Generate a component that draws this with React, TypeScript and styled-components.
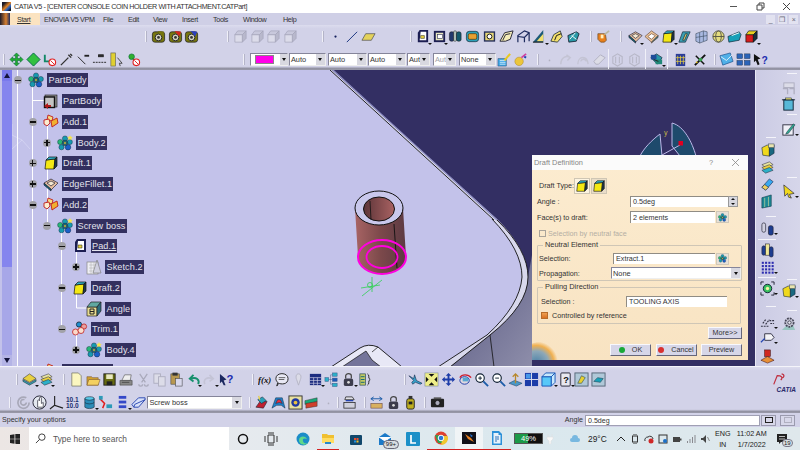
import React from "react";
import styled, { createGlobalStyle } from "styled-components";

const GlobalStyle = createGlobalStyle`
  html, body { margin: 0; padding: 0; width: 800px; height: 450px; overflow: hidden; }
  body { font-family: "Liberation Sans", Arial, sans-serif; background: #d2d2e8; }
`;

const box = (f: string, t: string, s: string, line = "#111") => (
  <g stroke={line} strokeWidth=".7">
    <path d="M2 6h8v8H2z" fill={f} />
    <path d="M2 6l3-4h9l-4 4z" fill={t} />
    <path d="M10 6l4-4v8l-4 4z" fill={s} />
  </g>
);
const dim = box("#dcdcea", "#c8c8dc", "#b8b8cc", "#a4a4b8");
const olive = (c: string) => (
  <g>
    <rect x="1.5" y="3" width="13" height="11" rx="2.5" fill="#77760e" stroke="#222" strokeWidth=".8" />
    <circle cx="8" cy="9" r="3.6" fill="#d4d4c0" stroke="#222" />
    <circle cx="8" cy="9" r="1.5" fill="#333" />
    <path d="M7 2l7 1-2 5z" fill={c} />
  </g>
);
const blob = (a: string, b: string) => (
  <g stroke="#123" strokeWidth=".4">
    <circle cx="8" cy="3.5" r="2.6" fill={a} />
    <circle cx="3.2" cy="7" r="2.6" fill={b} />
    <circle cx="12.8" cy="7" r="2.6" fill={a} />
    <circle cx="4.5" cy="12.2" r="2.6" fill={a} />
    <circle cx="11" cy="12.2" r="2.8" fill="#1a5fc8" />
    <circle cx="8" cy="8" r="2.8" fill="#1b6a80" />
    <circle cx="8" cy="8" r="1.2" fill="#e8d94a" />
  </g>
);
const star = <path d="M13 0l.8 1.8 2 .2-1.5 1.3.5 2-1.8-1-1.8 1 .5-2L10.2 2l2-.2z" fill="#f7e64a" />;
const arrows = (c: string) => (
  <g fill={c} stroke="#063" strokeWidth=".6">
    <path d="M8 1l3 3H9v3h3V5l3 3-3 3V9H9v3h2l-3 3-3-3h2V9H4v2L1 8l3-3v2h3V4H5z" />
  </g>
);
const dots = (c: string) => (
  <g fill={c}>
    {[3, 6.5, 10, 13.5].map((y) =>
      [3, 6.5, 10, 13.5].map((x) => <rect key={`${x}-${y}`} x={x - 1.1} y={y - 1.1} width="2.2" height="2.2" />)
    )}
  </g>
);

const glyphs: Record<string, React.ReactNode> = {
  cam: olive("#77760e"),
  camR: olive("#d4261c"),
  camB: olive("#2a3fc0"),
  dim,
  dot: <circle cx="8" cy="8" r="1.2" fill="#14205c" />,
  line: <path d="M3 14L14 3" stroke="#14307c" strokeWidth="1" />,
  para: <path d="M1 12l4-7h10l-4 7z" fill="#e4d25c" stroke="#555" strokeWidth=".8" />,
  pad: (
    <g>
      <path d="M5 1h9v13H3V4z" fill="#1c1e52" />
      <path d="M6 3h6v9H5z" fill="#fff" />
      <path d="M6 7h4v3H6z" fill="#e8d240" stroke="#111" strokeWidth=".5" />
    </g>
  ),
  pocket: (
    <g>
      <rect x="2" y="2" width="12" height="12" fill="#1c1e52" />
      <rect x="4" y="4" width="8" height="8" fill="#e8e8c0" />
      <rect x="6" y="6" width="5" height="4" fill="#fff" stroke="#225" strokeWidth=".6" />
    </g>
  ),
  shaft: (
    <g stroke="#111" strokeWidth=".5">
      <rect x="1.5" y="3" width="5" height="10" rx="2" fill="#23386c" />
      <rect x="6" y="2" width="3" height="11" rx="1" fill="#b8c8c0" />
      <rect x="9" y="3" width="5" height="10" rx="2" fill="#14586c" />
    </g>
  ),
  groove: (
    <g>
      <rect x="1.5" y="2.5" width="13" height="11" rx="3" fill="#2aa0b8" stroke="#123" strokeWidth=".7" />
      <rect x="3.5" y="5" width="9" height="6" rx="1.5" fill="#e8a030" stroke="#530" strokeWidth=".7" />
    </g>
  ),
  hole: (
    <g>
      <rect x="2" y="2.5" width="12" height="11" fill="#26305c" />
      <rect x="3.5" y="4" width="9" height="8" fill="#e8d878" />
      <circle cx="8" cy="8" r="2.6" fill="#fff" stroke="#111" />
    </g>
  ),
  rib: <path d="M1 13l5-9 9-2-3 9-5 2zM4 12l3-6 5-1" fill="#f4ecb8" stroke="#223" strokeWidth="1" />,
  slot: (
    <g fill="none" stroke="#1c2a5c" strokeWidth="1.3">
      <path d="M2 14V7l7-5 5 2v9" />
      <path d="M2 8l7 1 5-5M9 9v5" />
    </g>
  ),
  stiff: (
    <g>
      <path d="M1 14L12 1v13z" fill="#1c5a78" />
      <path d="M5 13l7-8v8z" fill="#f2e070" />
      <path d="M1 14h11" stroke="#111" />
    </g>
  ),
  loft: (
    <g>
      <path d="M2 13l3-7 7-4 2 6-5 6z" fill="#f4e06c" stroke="#123" strokeWidth=".8" />
      <path d="M6 12l2-5 5-2" fill="none" stroke="#111" strokeWidth="1" />
    </g>
  ),
  loft2: (
    <g>
      <path d="M2 7l9-4 3 2-3 8-8 1z" fill="#2a9aa8" stroke="#112" strokeWidth=".8" />
      <path d="M6 7l5 4M10 4l-6 7" stroke="#fff" strokeWidth="1" />
    </g>
  ),
  bowl: (
    <g>
      <path d="M2 5h8l1 7-2 2H5l-3-3z" fill="#e8801c" stroke="#642" strokeWidth=".7" />
      <path d="M5 6h3v4H5z" fill="#fff0c0" />
      <path d="M9 6l5-4" stroke="#b8b8a0" strokeWidth="2" />
    </g>
  ),
  fillet: (
    <g stroke="#223" strokeWidth=".7">
      <path d="M1 7l7-4 7 4-7 7z" fill="#e8c0a0" />
      <path d="M1 7v2l7 6V13z" fill="#167" />
      <path d="M4 7l4-2 4 2-4 3z" fill="#f4e8d0" />
    </g>
  ),
  fillet2: (
    <g stroke="#643" strokeWidth=".7">
      <path d="M1 8l7-6 7 5-7 7z" fill="#f0c89c" />
      <path d="M4 8l4-3 4 2-4 4z" fill="#fff" />
      <path d="M8 14l7-7v2l-7 6z" fill="#1a7a90" />
    </g>
  ),
  draft: (
    <g stroke="#111" strokeWidth=".7">
      <path d="M3 5l9-1-1 10H2z" fill="#f4e814" />
      <path d="M3 5l3-3h8l-2 2z" fill="#30b0c8" />
      <path d="M12 4l2-2v9l-3 3z" fill="#203848" />
    </g>
  ),
  slant: (
    <g stroke="#123" strokeWidth=".7">
      <path d="M2 14L6 3h8l-5 11z" fill="#3aa0b4" />
      <path d="M6 12l3-7 2 0-3 7z" fill="#e8d070" />
    </g>
  ),
  cage: (
    <g fill="#a8b8e0" stroke="#345" strokeWidth=".6">
      <path d="M2 5l8-3 4 1v9l-8 3-4-2z" />
      <path d="M6 4v11M10 2v11M2 9l12-2" fill="none" />
    </g>
  ),
  globe: (
    <g fill="none" stroke="#554" strokeWidth="1">
      <circle cx="8" cy="8" r="6" fill="#e4dc80" />
      <ellipse cx="8" cy="8" rx="3" ry="6" />
      <path d="M2 8h12" />
    </g>
  ),
  wave: (
    <g>
      <path d="M1 8l12-5 2 3-2 6-11 2z" fill="#18a0b8" stroke="#123" strokeWidth=".7" />
      <path d="M5 7l8-3" stroke="#fff" />
    </g>
  ),
  colorBox: box("#d81c1c", "#e8d020", "#18303c"),
  target: <g>{arrows("#22b030")}</g>,
  diamond: <path d="M8 1l7 7-7 7-7-7z" fill="#32c040" stroke="#064" strokeWidth="1" />,
  noAnchor: (
    <g>
      <path d="M3 3v7h7" stroke="#186" strokeWidth="2" fill="none" />
      <circle cx="11" cy="11" r="3.5" fill="#fff" stroke="#e02020" strokeWidth="1.2" />
      <path d="M9 9l4 4" stroke="#e02020" />
    </g>
  ),
  probe: <path d="M2 14L10 6M10 3l3 3M12 2l2 2" stroke="#333" strokeWidth="1.5" fill="none" />,
  toLine: (
    <g stroke="#222" strokeWidth="1" fill="none">
      <path d="M2 5l8 8" />
      <path d="M9 4h5" strokeWidth="2" />
    </g>
  ),
  dash: (
    <g fill="none" stroke="#222">
      <path d="M1 11h14" strokeDasharray="2 1" />
      <rect x="7" y="3" width="5" height="2" fill="#333" />
    </g>
  ),
  ruler: (
    <g>
      <rect x="2" y="1" width="5" height="14" fill="#e0d030" stroke="#665" strokeWidth=".7" />
      <path d="M9 6l5 6-3 0 1 3" stroke="#444" fill="none" />
    </g>
  ),
  noView: (
    <g>
      <circle cx="6" cy="5" r="3" fill="#30b030" stroke="#063" strokeWidth=".6" />
      <path d="M7 7l3 3" stroke="#444" />
      <circle cx="11" cy="11" r="3.5" fill="#fff" stroke="#e02020" strokeWidth="1.2" />
      <path d="M9 9l4 4" stroke="#e02020" />
    </g>
  ),
  brush: (
    <g>
      <path d="M1 7h9v8H1z" fill="#40a8e8" stroke="#246" strokeWidth=".5" />
      <path d="M3 9h6M3 11h6M3 13h6" stroke="#fff" strokeWidth=".7" />
      <path d="M8 9l6-7" stroke="#e8c820" strokeWidth="2.2" />
    </g>
  ),
  ball: (
    <g>
      <circle cx="6.5" cy="10" r="4.5" fill="#ecc63c" stroke="#a8801c" strokeWidth=".5" />
      <path d="M9 6l5-4" stroke="#d040a0" strokeWidth="2" />
      <path d="M12 5l2 1" stroke="#2040b0" strokeWidth="2" />
    </g>
  ),
  fade: <circle cx="8" cy="9" r=".9" fill="#b0b0c0" />,
  arcDim: <path d="M3 13c0-7 6-10 10-7M9 3l4 3-3 3" stroke="#c4c4d4" strokeWidth="1.6" fill="none" />,
  arcDim2: <path d="M3 13c0-9 10-10 11 0M6 10c1-3 5-3 6 0" stroke="#c4c4d4" strokeWidth="1.4" fill="none" />,
  eraser: <path d="M2 10l7-7 5 3-7 7H4z" fill="#dcdce6" stroke="#b0b0c0" />,
  hand: <path d="M3 5l5-3 5 3v7l-5 3-5-3zM6 5v7M10 5v7" fill="none" stroke="#b8b8c8" strokeWidth="1.2" />,
  net: (
    <g>
      <path d="M2 6l6-4 6 4-5 7z" fill="#2898a8" stroke="#123" strokeWidth=".7" />
      <rect x="2" y="3" width="6" height="5" fill="#1e4c98" />
      <rect x="7" y="8" width="7" height="5" fill="#208878" />
      <path d="M5 8l5 2" stroke="#222" />
    </g>
  ),
  navy: (
    <g>
      <rect x="3" y="2" width="10" height="13" fill="#2a3c98" />
      <path d="M5 4v9M8 4v9M11 4v9M3 6h10M3 10h10" stroke="#e8d040" strokeWidth=".8" />
    </g>
  ),
  black: (
    <g>
      <path d="M2 14L13 3" stroke="#111" strokeWidth="2" />
      <path d="M3 4l9 9" stroke="#111" strokeWidth="1.6" />
      <circle cx="8" cy="8" r="2" fill="#38a050" />
      <circle cx="4" cy="11" r="1" fill="#e0c020" />
    </g>
  ),
  mail: (
    <g>
      <path d="M1 4l11-3 3 9-11 4z" fill="#50b0e8" stroke="#1a4c88" strokeWidth=".7" />
      <path d="M2 5l6 4 6-6" stroke="#fff" fill="none" strokeWidth=".8" />
    </g>
  ),
  cubes: (
    <g fill="#2c64b8" stroke="#123" strokeWidth=".4">
      <rect x="1" y="2" width="6" height="5" />
      <rect x="9" y="2" width="6" height="5" />
      <rect x="1" y="9" width="6" height="5" />
      <rect x="9" y="9" width="6" height="5" />
    </g>
  ),
  help: (
    <g>
      <path d="M1 2l7 5-3 1 2 5-2 1-2-5-2 2z" fill="#111" />
      <text x="9" y="13" fontSize="11" fontWeight="700" fill="#1c2cb0" fontFamily="Liberation Sans">?</text>
    </g>
  ),
  layers: (
    <g stroke="#333" strokeWidth=".6">
      <path d="M1 7l7-5 7 5-7 4z" fill="#e8d040" />
      <path d="M1 10l7 4 7-4v-2l-7 4-7-4z" fill="#30a0b8" />
    </g>
  ),
  layers2: (
    <g stroke="#334" strokeWidth=".6">
      <path d="M2 5l8-3 4 3-8 3z" fill="#e8e4a0" />
      <path d="M2 8l8-3 4 3-8 3z" fill="#e8d040" />
      <path d="M2 11l8-3 4 3-8 3z" fill="#2cb0c8" />
    </g>
  ),
  newDoc: <path d="M3 1h7l3 3v11H3z" fill="#fbf6c0" stroke="#776" strokeWidth=".8" />,
  open: (
    <g stroke="#753" strokeWidth=".6">
      <path d="M1 5h5l1 1h6v8H1z" fill="#d0a030" />
      <path d="M3 8h12l-2 6H1z" fill="#f4d060" />
    </g>
  ),
  save: (
    <g>
      <rect x="2" y="2" width="12" height="12" fill="#666a10" stroke="#222" />
      <rect x="4.5" y="2.5" width="7" height="5" fill="#e8e8c0" />
      <rect x="5" y="10" width="6" height="4" fill="#222" />
    </g>
  ),
  print: (
    <g stroke="#444" strokeWidth=".6">
      <path d="M3 9l3-6h7l-1 6z" fill="#eee" />
      <path d="M1 9h13v5H1z" fill="#888" />
      <path d="M3 11h8" stroke="#222" />
    </g>
  ),
  cut: <path d="M4 2l6 9M12 2L6 11M3 13a1.5 1.5 0 1 0 4 0M9 13a1.5 1.5 0 1 0 4 0" stroke="#aaaabc" strokeWidth="1.4" fill="none" />,
  copy: (
    <g fill="#dcdce8" stroke="#aeaec0">
      <rect x="2" y="2" width="7" height="10" />
      <rect x="7" y="5" width="7" height="10" />
    </g>
  ),
  paste: (
    <g stroke="#444" strokeWidth=".6">
      <rect x="2" y="2" width="9" height="11" fill="#b89850" />
      <rect x="4" y="1" width="5" height="2.5" fill="#333" />
      <rect x="7" y="7" width="7" height="8" fill="#d8d8ec" />
    </g>
  ),
  undo: <path d="M13 13c2-5-2-8-8-6M8 3L4 7l4 3" stroke="#16906c" strokeWidth="2" fill="none" />,
  redo: <path d="M3 13c-2-5 2-8 8-6M8 3l4 4-4 3" stroke="#c4c4d6" strokeWidth="1.8" fill="none" />,
  whatsThis: (
    <g>
      <path d="M1 2l7 6-3 1 2 5-2 0-2-4-2 2z" fill="#1c2860" />
      <text x="8" y="12" fontSize="12" fontWeight="700" fill="#1c2cb0" fontFamily="Liberation Sans">?</text>
    </g>
  ),
  fog: (
    <text x="0" y="12" fontSize="9.5" fontStyle="italic" fontWeight="700" fill="#111" fontFamily="Liberation Serif">f(x)</text>
  ),
  bubble: (
    <g>
      <path d="M2 7c0-7 13-7 13 0s-8 6-10 5l-2 3 1-4c-1-1-2-2-2-4z" fill="#e8e8f4" stroke="#222" />
      <path d="M5 6h7M5 8h6" stroke="#222" strokeWidth=".7" />
    </g>
  ),
  pin: <path d="M8 2c3 0 3 4 2 6l-2 6-2-6C5 6 5 2 8 2z" fill="#dcdce8" stroke="#b4b4c4" />,
  table: (
    <g>
      <rect x="2" y="2" width="12" height="12" fill="#1c2c80" />
      <path d="M2 6h12M2 9h12M2 12h12M6 6v8M10 6v8" stroke="#d4d4e8" strokeWidth=".7" />
    </g>
  ),
  tree: (
    <g stroke="#358" strokeWidth=".5" fill="#2cb0c8">
      <rect x="1" y="6" width="4" height="4" />
      <rect x="9" y="1" width="5" height="3.5" />
      <rect x="9" y="6.5" width="5" height="3.5" fill="#1c58b8" />
      <rect x="9" y="12" width="5" height="3.5" />
      <path d="M5 8h4M7 3v10h2M7 3h2" fill="none" />
    </g>
  ),
  lock: (
    <g>
      <path d="M5 7V4c0-3 6-3 6 0v3" stroke="#444" fill="none" strokeWidth="1.3" />
      <rect x="3" y="7" width="10" height="8" rx="2" fill="#3c3c4c" />
      <circle cx="8" cy="11" r="1.4" fill="#ddd" />
    </g>
  ),
  formula: (
    <g>
      <rect x="2" y="2" width="6" height="12" fill="#c0c864" stroke="#245" strokeWidth=".7" />
      <path d="M3 5h4M3 8h4M3 11h4" stroke="#167" />
      <path d="M10 2c3 1 0 5 3 6-3 1 0 5-3 6" stroke="#222" fill="none" />
    </g>
  ),
  spiral: <path d="M14 8a6 6 0 1 1-3-5M11 8a3 3 0 1 1-2-3" stroke="#a8a8b8" strokeWidth="1.8" fill="none" />,
  handGlobe: (
    <g>
      <circle cx="8" cy="8" r="7" fill="#e4e8f0" stroke="#223" />
      <path d="M6 13V6c0-1 2-1 2 0V3c0-1 2-1 2 0v6l2-1v5z" fill="#fff" stroke="#223" strokeWidth=".7" />
    </g>
  ),
  axis: <path d="M6 1v10l9 3M6 11l-5 4" stroke="#222" strokeWidth="1.2" fill="none" />,
  nums: (
    <text x="0" y="7" fontSize="7" fontWeight="700" fill="#223070" fontFamily="Liberation Sans">
      <tspan x="1">10.1</tspan>
      <tspan x="1" y="14">10.0</tspan>
    </text>
  ),
  stack: (
    <g stroke="#123" strokeWidth=".6">
      <ellipse cx="8" cy="4" rx="5" ry="2.2" fill="#58c8e8" />
      <path d="M3 4v9c2 2 8 2 10 0V4c-2 2-8 2-10 0z" fill="#2c8cb8" />
      <path d="M3 8c2 2 8 2 10 0" fill="none" />
    </g>
  ),
  boolean: (
    <g>
      <path d="M2 4l5 5-2 5" stroke="#e01c1c" strokeWidth="1.6" fill="none" />
      <rect x="1" y="1" width="4" height="4" fill="#2c9ab8" />
      <rect x="9" y="10" width="6" height="4" fill="#2c9ab8" />
    </g>
  ),
  listing: (
    <g fill="#3448c8">
      <rect x="4" y="1" width="8" height="3" />
      <rect x="4" y="6" width="8" height="3" />
      <rect x="4" y="11" width="8" height="3" />
    </g>
  ),
  body3d: (
    <g stroke="#2844b0" strokeWidth="1">
      <path d="M1 10l7-7h7v2l-7 8H3z" fill="#d8e0f8" />
      <path d="M3 13l1-3 11-5" fill="none" />
    </g>
  ),
  mirror: (
    <g stroke="#123" strokeWidth=".6">
      <path d="M2 13l5-7 7 1-4 7z" fill="#c02030" />
      <path d="M4 5l5-3 4 4-5 3z" fill="#28a0b8" />
      <path d="M5 1l1 4" stroke="#e8d040" strokeWidth="1.4" />
    </g>
  ),
  rainbow: (
    <g stroke="#123" strokeWidth=".5">
      <path d="M1 14L5 3h7l3 11-4-3-5 0z" fill="#2080c8" />
      <path d="M5 9l2-4h3l2 4-3-1z" fill="#e83040" />
    </g>
  ),
  swatch: (
    <g>
      <rect x="1" y="1" width="14" height="14" fill="#e8e0a0" stroke="#333" />
      <circle cx="8" cy="8" r="4.5" fill="#2038a0" />
      <circle cx="8" cy="8" r="2" fill="#e8c040" />
    </g>
  ),
  plates: (
    <g stroke="#333" strokeWidth=".5">
      <path d="M1 6l13-3v4L1 10z" fill="#18a878" />
      <path d="M2 9l12-2v5L2 14z" fill="#d0402c" />
    </g>
  ),
  printer2: (
    <g stroke="#222" strokeWidth=".8">
      <path d="M4 2h7l2 3H3z" fill="#e0e0e8" />
      <rect x="2" y="8" width="12" height="6" fill="#d0d0dc" />
      <path d="M4 6h8" stroke="#2444b0" strokeWidth="1.4" />
    </g>
  ),
  measure: (
    <g>
      <path d="M2 4h12M2 4l3-2M2 4l3 2M14 4l-3-2M14 4l-3 2" stroke="#1c5ca8" fill="none" />
      <rect x="2" y="9" width="12" height="5" fill="#d8b060" stroke="#644" strokeWidth=".6" />
    </g>
  ),
  bottle: (
    <g>
      <rect x="6" y="1" width="4" height="3" fill="#333" />
      <rect x="4" y="4" width="8" height="11" rx="2" fill="#c0b020" stroke="#222" />
      <rect x="6" y="7" width="4" height="3" fill="#222" />
    </g>
  ),
  camera: (
    <g>
      <rect x="1" y="4" width="14" height="9" rx="1" fill="#222" />
      <circle cx="8" cy="8.5" r="2.8" fill="#aab" stroke="#111" />
      <rect x="4" y="2.5" width="8" height="2" fill="#555" />
    </g>
  ),
  plane: <path d="M1 4l5 3 1-4 2 6 6 3-2 1-5-2-3 2-1-2 2-2z" fill="#38a0c8" stroke="#124" strokeWidth=".6" />,
  fitAll: (
    <g>
      <rect x="1" y="1" width="14" height="14" fill="#eeee88" stroke="#789" strokeWidth=".6" />
      <path d="M8 5L5 2h6zM8 11l3 3H5zM5 8L2 5v6zM11 8l3-3v6z" fill="#111" />
    </g>
  ),
  pan: <path d="M8 1l3 3H9v3h3V5l3 3-3 3V9H9v3h2l-3 3-3-3h2V9H4v2L1 8l3-3v2h3V4H5z" fill="#1c3ca8" />,
  rotate: (
    <g>
      <ellipse cx="7" cy="9" rx="5" ry="4" fill="#e0d8e0" stroke="#1c3ca8" />
      <path d="M2 6c2-4 9-4 12 0" stroke="#d01c2c" strokeWidth="1.4" fill="none" />
      <rect x="5" y="6" width="6" height="4" fill="#58a8d0" />
    </g>
  ),
  zoomIn: (
    <g fill="none">
      <circle cx="6.5" cy="6.5" r="4.5" fill="#fff" stroke="#123" strokeWidth="1.2" />
      <path d="M4.5 6.5h4M6.5 4.5v4" stroke="#123" />
      <path d="M10 10l5 5" stroke="#1c5ca8" strokeWidth="2" />
    </g>
  ),
  zoomOut: (
    <g fill="none">
      <circle cx="6.5" cy="6.5" r="4.5" fill="#fff" stroke="#123" strokeWidth="1.2" />
      <path d="M4.5 6.5h4" stroke="#123" />
      <path d="M10 10l5 5" stroke="#1c5ca8" strokeWidth="2" />
    </g>
  ),
  normal: (
    <g>
      <path d="M1 12l6-3 8 3-6 3z" fill="#4898c8" stroke="#246" strokeWidth=".6" />
      <path d="M8 12V2M5 5l3-3 3 3" stroke="#b8882c" strokeWidth="1.4" fill="none" />
    </g>
  ),
  views: (
    <g>
      <rect x="1" y="1" width="14" height="14" fill="#1c3ca8" />
      <path d="M8 1v14M1 8h14" stroke="#e0e0ee" />
      <rect x="2" y="2" width="5" height="5" fill="#4898e8" />
    </g>
  ),
  cubeBlue: (
    <g stroke="#1858b8" strokeWidth="1">
      <path d="M1 5h10v10H1z" fill="#58c8f8" />
      <path d="M1 5l4-4h10l-4 4zM11 5l4-4v10l-4 4z" fill="#c8e8fc" />
    </g>
  ),
  qBox: (
    <g>
      <rect x="3" y="1" width="10" height="14" rx="1" fill="#e8e8f0" stroke="#223" />
      <text x="5.5" y="12" fontSize="10" fontWeight="700" fill="#111" fontFamily="Liberation Sans">?</text>
    </g>
  ),
  tile1: (
    <g>
      <rect x="1" y="1" width="14" height="14" fill="#b0c8d8" stroke="#567" />
      <path d="M4 12l4-8 4 2-4 6z" fill="#e8d030" stroke="#245" strokeWidth=".6" />
    </g>
  ),
  tile2: (
    <g>
      <rect x="1" y="1" width="14" height="14" fill="#b0c8d8" stroke="#567" />
      <path d="M3 10l4-4 6 1-3 4z" fill="#18a0b8" stroke="#245" strokeWidth=".6" />
    </g>
  ),
  sketchGrey: (
    <g stroke="#aeaec0" fill="#dcdce8">
      <rect x="3" y="2" width="11" height="5" />
      <path d="M2 8h5v6M9 8h5v6" fill="none" strokeWidth="1.4" />
    </g>
  ),
  frame: (
    <g>
      <rect x="3" y="3" width="10" height="11" fill="#58b8d8" stroke="#123" />
      <path d="M1 3h14" stroke="#123" />
      <rect x="5" y="1" width="6" height="2" fill="#e0d870" stroke="#123" strokeWidth=".5" />
    </g>
  ),
  pen: (
    <g>
      <rect x="2" y="3" width="11" height="11" fill="#f0f0f8" stroke="#334" />
      <path d="M6 11l7-9 2 1-7 9-3 1z" fill="#30a890" stroke="#123" strokeWidth=".5" />
    </g>
  ),
  pointer: <path d="M3 1l11 9-5 1 2 4-3-1-1-4-3 3z" fill="#f0d81c" stroke="#334" strokeWidth=".8" />,
  isoBox: (
    <g>
      <path d="M2 5l6-3 2 2v10l-7-1z" fill="#f0d81c" stroke="#123" strokeWidth=".6" />
      <path d="M10 4l5-2v9l-5 3z" fill="#186880" stroke="#123" strokeWidth=".6" />
      <rect x="9" y="1" width="6" height="4" fill="#e8e4b0" stroke="#234" strokeWidth=".5" />
    </g>
  ),
  eraserPink: (
    <g stroke="#124" strokeWidth=".6">
      <path d="M2 11l8-9 4 3-8 9z" fill="#38a8f0" />
      <path d="M2 11l3-3 4 3-3 3z" fill="#f0d060" />
    </g>
  ),
  books: (
    <g stroke="#034" strokeWidth=".6">
      <path d="M2 4l10-3v12L2 15z" fill="#1c8894" />
      <path d="M5 4v10M9 3v10" stroke="#e8e8a0" />
    </g>
  ),
  tubes: (
    <g stroke="#223" strokeWidth=".7">
      <rect x="2" y="2" width="4" height="10" rx="2" fill="#d0d0e0" />
      <rect x="9" y="5" width="5" height="10" rx="2" fill="#1c3c90" />
    </g>
  ),
  tubes2: (
    <g stroke="#223" strokeWidth=".6">
      <rect x="2" y="3" width="4" height="10" rx="2" fill="#1c3c90" />
      <rect x="6" y="1" width="4" height="12" fill="#f0e898" />
      <rect x="10" y="4" width="4" height="11" rx="2" fill="#1c3c90" />
    </g>
  ),
  dotGrid: dots("#2c2cb0"),
  targetDot: (
    <g>
      <path d="M1 4V1h3M12 1h3v3M1 12v3h3M15 12v3h-3" stroke="#223" fill="none" />
      <circle cx="8" cy="8" r="4.5" fill="#38c060" stroke="#123" />
      <circle cx="8" cy="8" r="1.8" fill="#f4f4a0" />
    </g>
  ),
  hatch: <path d="M1 12h8M3 9l3-4M6 10l4-5M10 6h5M11 9h4" stroke="#334" strokeWidth="1.2" strokeDasharray="2 1" fill="none" />,
  tag: (
    <g>
      <path d="M5 4h7l3 4-3 3H5z" fill="#f4f4f8" stroke="#334" />
      <path d="M1 13l4-4" stroke="#2444b0" strokeWidth="1.4" />
    </g>
  ),
  stamp: (
    <g>
      <rect x="5" y="1" width="6" height="7" fill="#d02820" stroke="#411" strokeWidth=".6" />
      <path d="M1 12l7-4 7 4-7 3z" fill="#e89038" stroke="#411" strokeWidth=".6" />
    </g>
  ),
  cog: (
    <g>
      <path d="M1 15l10-10 4 10z" fill="#80c0b0" opacity=".7" />
      <circle cx="9" cy="7" r="4.5" fill="#c8c8d8" stroke="#445" strokeWidth="1.8" strokeDasharray="2 1" />
      <circle cx="9" cy="7" r="1.8" fill="#e8e8f0" stroke="#445" />
    </g>
  ),
  solid: (
    <g stroke="#111" strokeWidth=".6">
      <rect x="2" y="2" width="12" height="12" fill="#8c8c8c" />
      <rect x="1.5" y="4" width="10" height="10.5" fill="#c4c4c4" stroke="#111" strokeWidth="1.4" />
      <path d="M1 13l4-3v2h3v2H5v2z" fill="#b01c1c" stroke="none" />
    </g>
  ),
  body: <g>{blob("#189ab0", "#28b878")}{star}</g>,
  part: <g>{blob("#189ab0", "#28b878")}</g>,
  add: (
    <g stroke="#c01c1c" strokeWidth=".9">
      <path d="M5 1l5 2-1 4-5-1z" fill="#f4dc80" />
      <path d="M1 6l5-1 1 4-3 3-3-2z" fill="#fbeed0" />
      <path d="M8 7l6-3 1 5-6 4z" fill="#f0b030" />
    </g>
  ),
  sketch: (
    <g>
      <rect x="1" y="3" width="11" height="12" fill="#eeeef4" stroke="#888" strokeWidth=".7" />
      <path d="M3 6h7M3 9h7M3 12h7M5 3v12M8 3v12" stroke="#aaa" strokeWidth=".5" />
      <path d="M11 1l4 13H7z" fill="#d0d0e0" stroke="#777" strokeWidth=".6" />
    </g>
  ),
  angle: (
    <g stroke="#222" strokeWidth=".7">
      <path d="M1 6h10v9H1z" fill="#e8dc90" />
      <path d="M1 6l4-5h10l-4 5z" fill="#60a8a0" />
      <path d="M11 6l4-5v9l-4 5z" fill="#2c6c7c" />
      <path d="M4 8h4v5H4zM4 10.5h4" fill="none" strokeWidth="1" />
    </g>
  ),
  trim: (
    <g stroke="#c02020" strokeWidth=".8">
      <circle cx="7" cy="3.5" r="2.6" fill="#2090d0" stroke="#123" />
      <circle cx="12" cy="5.5" r="2.6" fill="#e8a0a0" />
      <circle cx="3.5" cy="11" r="3" fill="#fbd8c8" />
      <circle cx="9" cy="9.5" r="3" fill="#f8e0d0" />
    </g>
  ),
};

const Screen = styled.div`
  width: 800px;
  height: 450px;
  display: flex;
  flex-direction: column;
  overflow: hidden;
  background: #d2d2e8;
  color: #222;
  position: relative;
`;

const TitleBar = styled.div`
  height: 13px;
  background: #fff;
  display: flex;
  align-items: center;
  font-size: 7.2px;
  letter-spacing: -0.4px;
  color: #333;
`;
const AppMark = styled.div`
  width: 9px;
  height: 9px;
  margin: 0 3px 0 2px;
  background: linear-gradient(135deg, #1a1a28 20%, #e08020 50%, #2060c8 70%, #111 90%);
`;
const TitleText = styled.span`
  flex: 1;
  white-space: nowrap;
`;
const WinButton = styled.span`
  width: 26.5px;
  display: flex;
  justify-content: center;
  color: #444;
  svg { width: 9px; height: 9px; }
`;

const MenuBar = styled.div`
  height: 12px;
  background: #cfcfe6;
  display: flex;
  align-items: center;
  font-size: 7.2px;
  letter-spacing: -0.35px;
  color: #333;
`;
const StartTab = styled.span`
  height: 100%;
  width: 40px;
  margin-right: 4px;
  display: flex;
  align-items: center;
  padding-left: 17px;
  box-sizing: border-box;
  background: linear-gradient(90deg, #1c1c2c 0, #d88030 6px, #1c2c60 10px, #fbe3c0 10px);
  text-decoration: underline;
  text-decoration-thickness: 0.5px;
`;
const MenuItem = styled.span<{ $w: number }>`
  width: ${(p) => p.$w}px;
  white-space: nowrap;
`;
const MdiButton = styled.span`
  width: 9px;
  height: 9px;
  margin-left: 2.5px;
  background: #e2e2f0;
  font-size: 7px;
  line-height: 9px;
  text-align: center;
  color: #667;
`;
const MdiGroup = styled.div`
  margin-left: auto;
  margin-right: 2px;
  display: flex;
`;

const ToolArea = styled.div`
  background: linear-gradient(180deg, #dcdcee 0, #d2d2e8 8%, #d2d2e8 92%, #8e8e9e 97%, #9c9cac 100%);
`;
const ToolRow = styled.div<{ $h: number }>`
  height: ${(p) => p.$h}px;
  display: flex;
  align-items: center;
  white-space: nowrap;
`;
const Handle = styled.span<{ $ml: number }>`
  flex: none;
  width: 2px;
  height: 11px;
  margin-left: ${(p) => p.$ml}px;
  background: #f0f0f8;
  border-right: 1px solid #b4b4c8;
  box-sizing: border-box;
`;
const Separator = styled.span<{ $ml: number }>`
  flex: none;
  width: 1px;
  height: 20px;
  margin-left: ${(p) => p.$ml}px;
  background: #f0f0f8;
`;
const ToolGroup = styled.div<{ $ml: number }>`
  display: flex;
  flex: none;
  margin-left: ${(p) => p.$ml}px;
`;
const Slot = styled.span<{ $w: number; $arrow?: boolean }>`
  flex: none;
  width: ${(p) => p.$w}px;
  height: 16px;
  display: flex;
  justify-content: center;
  align-items: center;
  position: relative;
  svg { width: 15px; height: 15px; }
  ${(p) =>
    p.$arrow &&
    `&::after {
      content: "";
      position: absolute;
      right: -1px;
      bottom: -2px;
      border: 2px solid transparent;
      border-top: 2.5px solid #111;
    }`}
`;

const Combo = styled.div<{ $w: number; $ml?: number; $dim?: boolean; $h?: number }>`
  flex: none;
  box-sizing: border-box;
  width: ${(p) => p.$w}px;
  height: ${(p) => p.$h ?? 13}px;
  margin-left: ${(p) => p.$ml ?? 0}px;
  background: #fff;
  border: 1px solid #85859a;
  border-right-color: #eee;
  border-bottom-color: #eee;
  display: flex;
  align-items: center;
  padding-left: 1px;
  font-size: 7.4px;
  color: ${(p) => (p.$dim ? "#a0a0a8" : "#333")};
  white-space: nowrap;
`;
const ComboLabel = styled.span`
  flex: 1;
  white-space: nowrap;
`;
const ComboArrow = styled.span`
  flex: none;
  width: 9px;
  align-self: stretch;
  background: #d8d8e0;
  display: flex;
  align-items: center;
  justify-content: center;
  &::before {
    content: "";
    border: 2px solid transparent;
    border-top: 3px solid #111;
    margin-top: 3px;
  }
`;
const ColorChip = styled.span`
  flex: none;
  width: 19px;
  height: 9px;
  margin: 0 6px 0 3px;
  background: #ff00e8;
  border: 1px solid #888;
  box-sizing: border-box;
`;

const Main = styled.div`
  flex: 1;
  min-height: 0;
  display: flex;
  border-bottom: 1px solid #f4f4fa;
`;
const Viewport = styled.div`
  flex: 1;
  position: relative;
  overflow: hidden;
  background: #332f63;
`;
const Scene = styled.svg`
  position: absolute;
  left: 0;
  top: 0;
  width: 755px;
  height: 296px;
`;

const Tree = styled.div`
  position: absolute;
  inset: 0 auto 0 0;
  width: 220px;
  display: flex;
`;
const TreeScroll = styled.div`
  flex: none;
  width: 10px;
  margin-left: 2px;
  display: flex;
  flex-direction: column;
  background: #a7a7e8;
`;
const ScrollArrow = styled.div<{ $down?: boolean }>`
  height: 11px;
  flex: none;
  margin-top: ${(p) => (p.$down ? "auto" : "0")};
  background: ${(p) => (p.$down ? "#b4b4e6" : "#7a7aec")};
  display: flex;
  align-items: center;
  justify-content: center;
  &::before {
    content: "";
    border-left: 3px solid transparent;
    border-right: 3px solid transparent;
    ${(p) => (p.$down ? "border-top: 5px solid #14143c;" : "border-bottom: 5px solid #14143c;")}
  }
`;
const ScrollThumb = styled.div`
  height: 186px;
  flex: none;
  background: #8585ee;
`;
const TreeLines = styled.svg`
  position: absolute;
  left: 0;
  top: 0;
  width: 120px;
  height: 296px;
`;
const TreeRows = styled.div`
  position: relative;
  flex: 1;
`;
const TreeRow = styled.div<{ $depth: number }>`
  height: 20.75px;
  display: flex;
  align-items: center;
  padding-left: ${(p) => 2 + p.$depth * 14.5}px;
`;
const Expander = styled.span<{ $open?: boolean; $none?: boolean }>`
  flex: none;
  width: 8px;
  height: 8px;
  border-radius: 50%;
  background: ${(p) => (p.$none ? "transparent" : "#a2a2a8")};
  position: relative;
  display: flex;
  align-items: center;
  justify-content: center;
  &::before {
    content: ${(p) => (p.$none ? "none" : '""')};
    width: 6px;
    height: 1.5px;
    background: #111;
  }
  &::after {
    content: ${(p) => (p.$open || p.$none ? "none" : '""')};
    position: absolute;
    width: 1.5px;
    height: 6px;
    background: #111;
  }
`;
const NodeIcon = styled.span`
  flex: none;
  width: 16px;
  height: 16px;
  margin-left: 6px;
  svg { width: 16px; height: 16px; display: block; }
`;
const NodeLabel = styled.span<{ $active?: boolean; $w?: number }>`
  margin-left: 3px;
  padding: 0 1px 0 1.5px;
  height: 14px;
  line-height: 14px;
  min-width: ${(p) => p.$w ?? 0}px;
  background: #33305f;
  color: #e4e4ee;
  font-size: 9.1px;
  letter-spacing: 0.1px;
  white-space: nowrap;
  text-decoration: ${(p) => (p.$active ? "underline" : "none")};
`;

const Dialog = styled.div`
  position: absolute;
  left: 532px;
  top: 85px;
  width: 216px;
  height: 205px;
  background: linear-gradient(180deg, #fcecd0 0, #f8e3c2 100%);
  font-size: 7.2px;
  color: #333;
  display: flex;
  flex-direction: column;
  overflow: hidden;
`;
const DialogTitle = styled.div`
  height: 15px;
  flex: none;
  background: #fbfbfb;
  display: flex;
  align-items: center;
  padding: 0 9px 0 2px;
  color: #858585;
  font-size: 7.4px;
`;
const DialogTitleText = styled.span`
  flex: 1;
`;
const DialogHelp = styled.span`
  margin-right: 19px;
  color: #888;
`;
const DialogBody = styled.div`
  flex: 1;
  padding: 7px 7px 0 5px;
  display: flex;
  flex-direction: column;
  position: relative;
`;
const FormRow = styled.div<{ $h: number; $mt?: number }>`
  height: ${(p) => p.$h}px;
  margin-top: ${(p) => p.$mt ?? 0}px;
  display: flex;
  align-items: center;
  flex: none;
`;
const FieldLabel = styled.span<{ $w: number }>`
  flex: none;
  width: ${(p) => p.$w}px;
  white-space: nowrap;
`;
const DraftButton = styled.span<{ $on?: boolean }>`
  width: 16px;
  height: 16px;
  margin-right: 1px;
  background: ${(p) => (p.$on ? "#fdf4e2" : "#e9ddc8")};
  border: 1px solid #cfc6b4;
  box-sizing: border-box;
  svg { width: 14px; height: 14px; display: block; }
`;
const Field = styled.div<{ $w: number }>`
  flex: none;
  box-sizing: border-box;
  width: ${(p) => p.$w}px;
  height: 11.5px;
  line-height: 10px;
  background: #fff;
  border-top: 1px solid #908c84;
  border-left: 1px solid #908c84;
  padding-left: 2px;
  display: flex;
  align-items: center;
  white-space: nowrap;
`;
const Spinner = styled.div`
  flex: none;
  width: 10px;
  height: 11px;
  background: #d8d8e0;
  border: 1px solid #999;
  box-sizing: border-box;
  display: flex;
  flex-direction: column;
  align-items: center;
  justify-content: space-around;
  &::before {
    content: "";
    border: 2px solid transparent;
    border-bottom: 2.5px solid #111;
    border-top: 0;
  }
  &::after {
    content: "";
    border: 2px solid transparent;
    border-top: 2.5px solid #111;
    border-bottom: 0;
  }
`;
const PickButton = styled.span`
  flex: none;
  width: 13px;
  height: 12px;
  margin-left: 1px;
  background: #e6e0d8;
  border: 1px solid #d0c8b8;
  box-sizing: border-box;
  display: flex;
  align-items: center;
  justify-content: center;
  svg { width: 9px; height: 9px; }
`;
const Check = styled.span<{ $on?: boolean }>`
  flex: none;
  width: 7px;
  height: 7px;
  margin: 0 2px 0 2px;
  box-sizing: border-box;
  border: 1px solid ${(p) => (p.$on ? "#b86c28" : "#aaa49a")};
  background: ${(p) => (p.$on ? "linear-gradient(180deg,#f0a050,#d87020)" : "transparent")};
`;
const FadedLabel = styled.span`
  color: #b4aea4;
`;
const FieldGroup = styled.fieldset<{ $h: number; $mt?: number }>`
  flex: none;
  margin: ${(p) => p.$mt ?? 0}px 0 0 0;
  padding: 0 0 0 1px;
  height: ${(p) => p.$h}px;
  box-sizing: border-box;
  border: 1px solid #cfc6b6;
  border-radius: 1px;
  legend {
    margin-left: 4px;
    padding: 0 2px;
    font-size: 7.4px;
    line-height: 8px;
  }
`;
const ActionRow = styled.div<{ $mt: number }>`
  display: flex;
  justify-content: flex-end;
  gap: 4.5px;
  margin-top: ${(p) => p.$mt}px;
  position: relative;
  flex: none;
  margin-right: -1px;
`;
const ActionButton = styled.span<{ $w: number }>`
  box-sizing: border-box;
  width: ${(p) => p.$w}px;
  height: 11.5px;
  background: #d6d6e8;
  border-top: 1px solid #f8f8fc;
  border-left: 1px solid #f8f8fc;
  border-right: 1px solid #66667a;
  border-bottom: 1px solid #66667a;
  display: flex;
  align-items: center;
  justify-content: center;
  gap: 7px;
  font-size: 7.2px;
`;
const Lamp = styled.span<{ $c: string }>`
  width: 6px;
  height: 6px;
  border-radius: 50%;
  background: ${(p) => p.$c};
`;
const CornerGlow = styled.span`
  position: absolute;
  left: -10px;
  bottom: -12px;
  width: 36px;
  height: 30px;
  border-radius: 50%;
  background: radial-gradient(circle at 40% 70%, #4c82a8 0, #8ea8b8 40%, #f0b050 58%, transparent 72%);
`;

const RightBar = styled.div`
  flex: none;
  width: 45px;
  display: flex;
  background: linear-gradient(90deg, #cbcbe4 0, #d6d6ea 100%);
  border-left: 1px solid #e8e8f4;
  box-sizing: border-box;
`;
const RightColumn = styled.div<{ $w: number }>`
  width: ${(p) => p.$w}px;
  display: flex;
  flex-direction: column;
  align-items: flex-end;
  flex: none;
`;
const RightGrip = styled.span<{ $mt: number; $w?: number }>`
  flex: none;
  height: 1px;
  width: ${(p) => p.$w ?? 10}px;
  margin-top: ${(p) => p.$mt}px;
  background: #f4f4fa;
`;
const RightSlot = styled.span<{ $mt: number; $arrow?: boolean }>`
  flex: none;
  width: 18px;
  height: 14px;
  margin-top: ${(p) => p.$mt}px;
  display: flex;
  justify-content: center;
  position: relative;
  svg { width: 15px; height: 15px; }
  ${(p) =>
    p.$arrow &&
    `&::after {
      content: "";
      position: absolute;
      right: -2px;
      bottom: -2px;
      border: 2px solid transparent;
      border-top: 2.5px solid #111;
    }`}
`;

const CatiaMark = styled.div`
  margin-left: auto;
  margin-right: 4px;
  margin-top: 8px;
  width: 26px;
  height: 20px;
  flex: none;
  color: #2a2a6a;
  font-size: 6.5px;
  line-height: 6px;
  font-style: italic;
  font-weight: 700;
  text-align: right;
  svg { width: 14px; height: 14px; display: block; margin-left: 2px; }
`;

const StatusBar = styled.div`
  height: 14px;
  flex: none;
  background: #d2d2e8;
  display: flex;
  align-items: center;
  font-size: 7.1px;
  color: #333;
  padding-left: 2px;
`;
const StatusText = styled.span`
  flex: 1;
`;
const StatusLabel = styled.span`
  margin-right: 2px;
`;
const StatusInput = styled.div`
  width: 175px;
  height: 11px;
  line-height: 10px;
  background: #fff;
  border: 1px solid #a0a0b4;
  box-sizing: border-box;
  padding-left: 2px;
`;
const StatusButton = styled.span<{ $dim?: boolean }>`
  width: 15px;
  height: 11px;
  margin-left: ${(p) => (p.$dim ? 4 : 1)}px;
  margin-right: ${(p) => (p.$dim ? 5 : 0)}px;
  background: #d8d8ea;
  border: 1px solid #9a9aae;
  box-sizing: border-box;
  display: flex;
  align-items: center;
  justify-content: center;
  &::before {
    content: "";
    width: 6px;
    height: 4px;
    border: 1px solid ${(p) => (p.$dim ? "#b0b0c0" : "#222")};
  }
`;

const Taskbar = styled.div`
  height: 23px;
  flex: none;
  background: linear-gradient(90deg, #ece6e4 0, #e6eaee 30%, #dae8ee 65%, #dfe8ec 100%);
  display: flex;
  align-items: center;
  color: #222;
`;
const StartButton = styled.span`
  flex: none;
  width: 29px;
  display: flex;
  justify-content: center;
  svg { width: 10px; height: 10px; }
`;
const SearchBox = styled.div`
  flex: none;
  width: 200px;
  height: 100%;
  background: #fff;
  display: flex;
  align-items: center;
  gap: 7px;
  padding-left: 6px;
  box-sizing: border-box;
  font-size: 8.4px;
  color: #555;
  svg { width: 11px; height: 11px; }
`;
const TaskIcon = styled.span<{ $w?: number; $ml?: number; $running?: boolean; $active?: boolean }>`
  flex: none;
  width: ${(p) => p.$w ?? 28}px;
  margin-left: ${(p) => p.$ml ?? 0}px;
  height: 100%;
  display: flex;
  align-items: center;
  justify-content: center;
  box-sizing: border-box;
  position: relative;
  background: ${(p) => (p.$active ? "#f0f4f6" : "transparent")};
  border-bottom: ${(p) => (p.$running ? "1.5px solid #d42020" : "0")};
  svg { width: 14px; height: 14px; }
`;
const Badge = styled.span`
  position: absolute;
  right: 0;
  bottom: 1px;
  padding: 0 2px;
  border-radius: 5px;
  background: #d8dce0;
  border: 1px solid #667;
  font-size: 6px;
  line-height: 7px;
  color: #222;
`;
const BatteryMeter = styled.div`
  flex: none;
  width: 29px;
  height: 11px;
  margin-left: 3px;
  background: #111;
  border: 1px solid #555;
  box-sizing: border-box;
  position: relative;
  color: #fff;
  font-size: 7.5px;
  line-height: 9px;
  text-align: center;
`;
const BatteryLevel = styled.span`
  position: absolute;
  left: 0;
  top: 0;
  bottom: 0;
  background: #1c9a48;
`;
const BatteryText = styled.span`
  position: relative;
`;
const TrayText = styled.span<{ $ml?: number; $size?: number }>`
  flex: none;
  margin-left: ${(p) => p.$ml ?? 0}px;
  font-size: ${(p) => p.$size ?? 9}px;
  white-space: nowrap;
`;
const TrayIcon = styled.span<{ $w?: number; $ml?: number }>`
  flex: none;
  width: ${(p) => p.$w ?? 14}px;
  margin-left: ${(p) => p.$ml ?? 0}px;
  display: flex;
  justify-content: center;
  svg { width: 10px; height: 10px; }
`;
const TrayStack = styled.div<{ $w: number; $ml: number }>`
  flex: none;
  width: ${(p) => p.$w}px;
  margin-left: ${(p) => p.$ml}px;
  text-align: center;
  font-size: 7.2px;
  line-height: 11px;
`;
const NoteIcon = styled.span`
  flex: none;
  margin-left: 9px;
  position: relative;
  width: 14px;
  display: flex;
  svg { width: 12px; height: 12px; }
`;
const NoteCount = styled.span`
  position: absolute;
  right: -3px;
  bottom: -2px;
  font-size: 6px;
  padding: 0 1px;
  border-radius: 4px;
  background: #d8e0e4;
  border: 1px solid #778;
  line-height: 6px;
`;

function Glyph({ name }: { name: string }) {
  return <svg viewBox="0 0 16 16">{glyphs[name]}</svg>;
}

// "name*" gets the little drop-down triangle
function Tools({ ml, names, step = 16.7 }: { ml: number; names: string; step?: number }) {
  return (
    <ToolGroup $ml={ml}>
      {names.split(" ").map((n, i) => (
        <Slot key={i} $w={step} $arrow={n.endsWith("*")}>
          <Glyph name={n.replace("*", "")} />
        </Slot>
      ))}
    </ToolGroup>
  );
}

type Node = { label: string; icon: string; depth: number; exp?: "open" | "closed"; active?: boolean; w?: number };
const nodes: Node[] = [
  { label: "PartBody", icon: "part", depth: 0, exp: "open" },
  { label: "PartBody", icon: "solid", depth: 1 },
  { label: "Add.1", icon: "add", depth: 1, exp: "open" },
  { label: "Body.2", icon: "body", depth: 2, exp: "closed" },
  { label: "Draft.1", icon: "draft", depth: 1, exp: "closed" },
  { label: "EdgeFillet.1", icon: "fillet", depth: 1, exp: "closed" },
  { label: "Add.2", icon: "add", depth: 1, exp: "open" },
  { label: "Screw boss", icon: "body", depth: 2, exp: "open" },
  { label: "Pad.1", icon: "pad", depth: 3, exp: "open", active: true },
  { label: "Sketch.2", icon: "sketch", depth: 4, exp: "closed" },
  { label: "Draft.2", icon: "draft", depth: 3, exp: "open" },
  { label: "Angle", icon: "angle", depth: 4 },
  { label: "Trim.1", icon: "trim", depth: 3, exp: "open" },
  { label: "Body.4", icon: "body", depth: 4, exp: "closed" },
  { label: "", icon: "add", depth: 1, exp: "closed", w: 49 },
];

const batteryPercent = 49;

function PartScene() {
  return (
    <Scene viewBox="0 70 755 296">
      <defs>
        <linearGradient id="wall" x1="0" y1="0" x2="1" y2="1">
          <stop offset="0" stopColor="#55557f" />
          <stop offset="1" stopColor="#8e8eaa" />
        </linearGradient>
        <linearGradient id="skin" x1="0" y1="0" x2="1" y2="0">
          <stop offset="0" stopColor="#a86464" />
          <stop offset=".5" stopColor="#7c494b" />
          <stop offset="1" stopColor="#5c3a42" />
        </linearGradient>
        <linearGradient id="bore" x1="0" y1="0" x2="1" y2="0">
          <stop offset="0" stopColor="#5c3438" />
          <stop offset="1" stopColor="#a96262" />
        </linearGradient>
      </defs>
      <path d="M450 367L490 335Q528 305 528 277L532 255V367Z" fill="url(#wall)" />
      <path d="M332 70L498 220Q528 250 528 277Q528 305 490 335L450 367H0V70Z" fill="#d8d8ec" />
      <path d="M330 70L493 220Q522 250 522 277Q520 305 487 335L438 367H0V70Z" fill="#c3c2ea" />
      <path d="M330 70L494 220" stroke="#111" strokeWidth=".9" fill="none" />
      <path d="M333 70L497 220" stroke="#8f8fc4" strokeWidth="1.2" fill="none" />
      <path d="M492 219Q522 250 522 277Q520 305 487 335L438 367" stroke="#111" strokeWidth=".9" fill="none" />
      <path d="M497 220Q528 250 528 277Q528 305 490 335L450 367" stroke="#111" strokeWidth=".9" fill="none" />
      <path d="M490 335L494 367" stroke="#111" strokeWidth=".8" fill="none" />
      <path d="M331 367L360 348Q368 343 378 347L402 367Z" fill="#e8e8f6" stroke="#111" strokeWidth=".9" />
      <path d="M342 367L366 351L372 360L381 367Z" fill="#74749a" stroke="#111" strokeWidth=".7" />
      <path d="M378 347L372 352" stroke="#111" strokeWidth=".7" />

      <path d="M355 208L358 257A24 17 0 0 0 406 257L403 208Z" fill="url(#skin)" />
      <ellipse cx="379" cy="208" rx="24" ry="17" fill="#c9c8ec" stroke="#111" strokeWidth="1" />
      <ellipse cx="379" cy="209" rx="15.5" ry="12" fill="url(#bore)" stroke="#111" strokeWidth="1" />
      <path d="M370 201L371 220" stroke="#111" strokeWidth=".8" />
      <path d="M394 224L397 268" stroke="#111" strokeWidth=".9" />
      <ellipse cx="382" cy="257" rx="24" ry="17" fill="none" stroke="#ff00e0" strokeWidth="2" />
      <ellipse cx="382" cy="257" rx="15.5" ry="11" fill="none" stroke="#ff00e0" strokeWidth="1.8" />

      <g stroke="#2ed050" strokeWidth=".8" fill="none">
        <path d="M362 296L382 280M361 288L380 285M372 277V292" />
        <circle cx="370" cy="285" r="2.5" />
      </g>

      <g stroke="#bcb8e8" strokeWidth="1" fill="#1e4a6c">
        <path d="M660 134C652 140 644 148 640 156L662 156Z" />
        <path d="M672 123C684 126 692 142 696 156L680 156L672 146Z" />
        <path d="M680 145L662 155" fill="none" />
      </g>
      <rect x="678.5" y="141" width="4.5" height="4.5" fill="#e00020" />
      <text x="664" y="135" fontSize="7" fill="#c8b848" fontFamily="Liberation Sans">y</text>

      <g stroke="#dcdcf6" strokeWidth=".6" fill="none">
        <path d="M2 132L12 135L22 140L30 149M12 135L4 148M12 135L12 124M12 149L22 140" />
      </g>
    </Scene>
  );
}

function TreeWires() {
  return (
    <TreeLines viewBox="0 70 120 296">
      <g stroke="#fff" strokeWidth="1" fill="none">
        <path d="M17.5 70V367M32.5 82V367" />
        <path d="M47.5 122V225M61.5 225V329M76.5 245V267M76.5 287V308M76.5 329V350" />
        <path d="M32.5 100.5H44M76.5 308H88" />
      </g>
    </TreeLines>
  );
}

function DraftDialog() {
  return (
    <Dialog>
      <DialogTitle>
        <DialogTitleText>Draft Definition</DialogTitleText>
        <DialogHelp>?</DialogHelp>
        <svg width="7" height="7" viewBox="0 0 7 7">
          <path d="M0 0l7 7M7 0L0 7" stroke="#888" strokeWidth=".8" />
        </svg>
      </DialogTitle>
      <DialogBody>
        <FormRow $h={17}>
          <FieldLabel $w={37}>&nbsp;Draft Type:</FieldLabel>
          <DraftButton $on>
            <Glyph name="draft" />
          </DraftButton>
          <DraftButton>
            <Glyph name="draft" />
          </DraftButton>
        </FormRow>
        <FormRow $h={11} $mt={2}>
          <FieldLabel $w={93}>Angle :</FieldLabel>
          <Field $w={98}>0.5deg</Field>
          <Spinner />
        </FormRow>
        <FormRow $h={12} $mt={4}>
          <FieldLabel $w={93}>Face(s) to draft:</FieldLabel>
          <Field $w={85}>2 elements</Field>
          <PickButton>
            <Glyph name="part" />
          </PickButton>
        </FormRow>
        <FormRow $h={10} $mt={5}>
          <Check />
          <FadedLabel>Selection by neutral face</FadedLabel>
        </FormRow>
        <FieldGroup $h={40} $mt={3}>
          <legend>Neutral Element</legend>
          <FormRow $h={13} $mt={3}>
            <FieldLabel $w={74}>Selection:</FieldLabel>
            <Field $w={102}>Extract.1</Field>
            <PickButton>
              <Glyph name="part" />
            </PickButton>
          </FormRow>
          <FormRow $h={12} $mt={2}>
            <FieldLabel $w={72}>Propagation:</FieldLabel>
            <Combo $w={130} $h={12}>
              <ComboLabel>None</ComboLabel>
              <ComboArrow />
            </Combo>
          </FormRow>
        </FieldGroup>
        <FieldGroup $h={41} $mt={2}>
          <legend>Pulling Direction</legend>
          <FormRow $h={11} $mt={5}>
            <FieldLabel $w={87}>&nbsp;Selection :</FieldLabel>
            <Field $w={101}>TOOLING AXIS</Field>
          </FormRow>
          <FormRow $h={11} $mt={3}>
            <Check $on />
            <span>&nbsp;Controlled by reference</span>
          </FormRow>
        </FieldGroup>
        <ActionRow $mt={3}>
          <ActionButton $w={34}>More&gt;&gt;</ActionButton>
        </ActionRow>
        <ActionRow $mt={5.5}>
          <ActionButton $w={41}>
            <Lamp $c="#18a838" />
            OK
          </ActionButton>
          <ActionButton $w={41}>
            <Lamp $c="#d83030" />
            Cancel
          </ActionButton>
          <ActionButton $w={41}>Preview</ActionButton>
        </ActionRow>
        <CornerGlow />
      </DialogBody>
    </Dialog>
  );
}

export default function App() {
  return (
    <Screen>
      <GlobalStyle />
      <TitleBar>
        <AppMark />
        <TitleText>CATIA V5 - [CENTER CONSOLE COIN HOLDER WITH ATTACHMENT.CATPart]</TitleText>
        <WinButton>
          <svg viewBox="0 0 9 9"><path d="M1 4.5h7" stroke="#555" /></svg>
        </WinButton>
        <WinButton>
          <svg viewBox="0 0 9 9"><path d="M1 3h5v5H1zM3 3V1h5v5H6" stroke="#444" fill="none" /></svg>
        </WinButton>
        <WinButton>
          <svg viewBox="0 0 9 9"><path d="M1 1l7 7M8 1L1 8" stroke="#444" /></svg>
        </WinButton>
      </TitleBar>

      <MenuBar>
        <StartTab>Start</StartTab>
        <MenuItem $w={59}>ENOVIA V5 VPM</MenuItem>
        <MenuItem $w={25}>File</MenuItem>
        <MenuItem $w={25}>Edit</MenuItem>
        <MenuItem $w={29}>View</MenuItem>
        <MenuItem $w={31}>Insert</MenuItem>
        <MenuItem $w={30}>Tools</MenuItem>
        <MenuItem $w={40}>Window</MenuItem>
        <MenuItem $w={30}>Help</MenuItem>
        <MdiGroup>
          <MdiButton>_</MdiButton>
          <MdiButton>❐</MdiButton>
          <MdiButton>×</MdiButton>
        </MdiGroup>
      </MenuBar>

      <ToolArea>
        <ToolRow $h={23}>
          <Handle $ml={145} />
          <Tools ml={3} names="cam camR camB" />
          <Handle $ml={27} />
          <Tools ml={3} names="dim dim dim dim" />
          <Handle $ml={23} />
          <Tools ml={3} names="dot line para" />
          <Handle $ml={33} />
          <Tools ml={2} step={16.8} names="pad* pocket* shaft groove hole rib slot stiff* loft loft2" />
          <Handle $ml={8} />
          <Tools ml={3} names="bowl" />
          <Handle $ml={8.3} />
          <Tools ml={5} step={16.6} names="fillet* fillet2 draft* slant cage globe wave colorBox*" />
        </ToolRow>
        <ToolRow $h={22}>
          <Handle $ml={3} />
          <Tools ml={3} names="target diamond noAnchor probe toLine dash ruler noView" />
          <Handle $ml={101.4} />
          <Combo $w={38} $ml={5}>
            <ColorChip />
            <ComboArrow />
          </Combo>
          <Combo $w={37} $ml={1}>
            <ComboLabel>Auto</ComboLabel>
            <ComboArrow />
          </Combo>
          <Combo $w={39} $ml={2}>
            <ComboLabel>Auto</ComboLabel>
            <ComboArrow />
          </Combo>
          <Combo $w={38} $ml={1}>
            <ComboLabel>Auto</ComboLabel>
            <ComboArrow />
          </Combo>
          <Combo $w={23} $ml={1}>
            <ComboLabel>Aut</ComboLabel>
            <ComboArrow />
          </Combo>
          <Combo $w={23} $ml={3} $dim>
            <ComboLabel>Aut</ComboLabel>
            <ComboArrow />
          </Combo>
          <Combo $w={37} $ml={3}>
            <ComboLabel>None</ComboLabel>
            <ComboArrow />
          </Combo>
          <Tools ml={0} names="brush ball" />
          <Handle $ml={7.6} />
          <Tools ml={2} names="fade arcDim arcDim2 eraser" />
          <Separator $ml={0} />
          <Tools ml={1} names="hand hand" />
          <Separator $ml={1.6} />
          <Tools ml={3} names="net*" />
          <Separator $ml={2} />
          <Tools ml={4} names="navy" />
          <Tools ml={3} names="black" />
          <Handle $ml={5} />
          <Tools ml={3} names="mail cubes help" />
        </ToolRow>
      </ToolArea>

      <Main>
        <Viewport>
          <PartScene />
          <TreeWires />
          <Tree>
            <TreeScroll>
              <ScrollArrow />
              <ScrollThumb />
              <ScrollArrow $down />
            </TreeScroll>
            <TreeRows>
              {nodes.map((n, i) => (
                <TreeRow key={i} $depth={n.depth}>
                  <Expander $open={n.exp === "open"} $none={!n.exp} />
                  <NodeIcon>
                    <Glyph name={n.icon} />
                  </NodeIcon>
                  <NodeLabel $active={n.active} $w={n.w}>{n.label}</NodeLabel>
                </TreeRow>
              ))}
            </TreeRows>
          </Tree>
          <DraftDialog />
        </Viewport>
        <RightBar>
          <RightColumn $w={20}>
            <RightGrip $mt={67} />
            <RightSlot $mt={5}><Glyph name="isoBox" /></RightSlot>
            <RightSlot $mt={3}><Glyph name="layers2" /></RightSlot>
            <RightSlot $mt={3}><Glyph name="eraserPink" /></RightSlot>
            <RightSlot $mt={3}><Glyph name="books" /></RightSlot>
            <RightGrip $mt={8} />
            <RightSlot $mt={4} $arrow><Glyph name="tubes" /></RightSlot>
            <RightGrip $mt={4} $w={18} />
            <RightSlot $mt={3}><Glyph name="tubes2" /></RightSlot>
            <RightSlot $mt={3} $arrow><Glyph name="dotGrid" /></RightSlot>
            <RightGrip $mt={3} $w={18} />
            <RightSlot $mt={3} $arrow><Glyph name="targetDot" /></RightSlot>
            <RightGrip $mt={11} />
            <RightSlot $mt={8} $arrow><Glyph name="hatch" /></RightSlot>
            <RightSlot $mt={1} $arrow><Glyph name="tag" /></RightSlot>
            <RightSlot $mt={5}><Glyph name="stamp" /></RightSlot>
          </RightColumn>
          <RightColumn $w={21}>
            <RightGrip $mt={3} />
            <RightSlot $mt={7}><Glyph name="sketchGrey" /></RightSlot>
            <RightSlot $mt={2}><Glyph name="frame" /></RightSlot>
            <RightGrip $mt={3} />
            <RightSlot $mt={7} $arrow><Glyph name="pen" /></RightSlot>
            <RightGrip $mt={41} />
            <RightSlot $mt={6} $arrow><Glyph name="pointer" /></RightSlot>
            <RightGrip $mt={81} />
            <RightSlot $mt={4} $arrow><Glyph name="isoBox" /></RightSlot>
            <RightGrip $mt={12} />
            <RightSlot $mt={5}><Glyph name="cog" /></RightSlot>
          </RightColumn>
        </RightBar>
      </Main>

      <ToolArea>
        <ToolRow $h={24}>
          <Handle $ml={16} />
          <Tools ml={3} names="layers* layers2*" />
          <Handle $ml={8.6} />
          <Tools ml={3} names="newDoc open save print cut copy paste undo* redo* whatsThis" />
          <Handle $ml={17} />
          <Tools ml={3} names="fog bubble pin table* tree lock* formula" />
          <Handle $ml={30} />
          <Tools ml={1} names="plane fitAll pan rotate zoomIn zoomOut normal views cubeBlue* qBox* tile1 tile2" />
          <CatiaMark>
            <svg viewBox="0 0 16 16">
              <path d="M2 13L6 3c5 0 7 2 4 5M11 1c4 1 3 4 0 5" fill="none" stroke="#c03040" strokeWidth="1.4" />
            </svg>
            CATIA
          </CatiaMark>
        </ToolRow>
        <ToolRow $h={22}>
          <Handle $ml={9} />
          <Tools ml={4} step={16.5} names="spiral handGlobe axis nums stack* boolean listing* body3d" />
          <Combo $w={95} $ml={0.4}>
            <ComboLabel>Screw boss</ComboLabel>
            <ComboArrow />
          </Combo>
          <Handle $ml={7} />
          <Tools ml={2} names="mirror rainbow swatch plates fade" />
          <Handle $ml={0.5} />
          <Tools ml={2} names="printer2" />
          <Handle $ml={6.3} />
          <Tools ml={2} names="measure lock bottle" />
          <Handle $ml={6} />
          <Tools ml={3} names="camera" />
        </ToolRow>
      </ToolArea>

      <StatusBar>
        <StatusText>Specify your options</StatusText>
        <StatusLabel>Angle</StatusLabel>
        <StatusInput>0.5deg</StatusInput>
        <StatusButton />
        <StatusButton $dim />
      </StatusBar>

      <Taskbar>
        <StartButton>
          <svg viewBox="0 0 10 10">
            <path d="M0 1l4.5-.7V4.7H0zM5.3 0L10 -.5V4.7H5.3zM0 5.3h4.5v4.4L0 9zM5.3 5.3H10V10.5L5.3 9.8z" fill="#222" />
          </svg>
        </StartButton>
        <SearchBox>
          <svg viewBox="0 0 12 12">
            <circle cx="7.5" cy="4.5" r="3.5" fill="none" stroke="#333" />
            <path d="M5 7l-4 4" stroke="#333" />
          </svg>
          Type here to search
        </SearchBox>
        <TaskIcon>
          <svg viewBox="0 0 14 14"><circle cx="7" cy="7" r="4.5" fill="none" stroke="#111" strokeWidth="1.5" /></svg>
        </TaskIcon>
        <TaskIcon>
          <svg viewBox="0 0 14 14"><path d="M4 3h6v8H4zM1 4v6M13 4v6M4 1h6M4 13h6" fill="none" stroke="#333" /></svg>
        </TaskIcon>
        <TaskIcon $ml={4}>
          <svg viewBox="0 0 14 14">
            <circle cx="7" cy="7" r="6.5" fill="#1b8dc8" />
            <path d="M3 8c0-4 6-5 8-1-2-1-5-1-4 2 0 2 3 3 5 2-3 3-9 2-9-3z" fill="#5fd88a" />
          </svg>
        </TaskIcon>
        <TaskIcon $w={22} $running>
          <svg viewBox="0 0 14 14">
            <path d="M1 3h5l1 1h6v8H1z" fill="#f0c030" />
            <path d="M1 7h12v5H1z" fill="#ffdc60" />
            <path d="M4 11h6v2H4z" fill="#2888c8" />
          </svg>
        </TaskIcon>
        <TaskIcon $ml={3}>
          <svg viewBox="0 0 14 14">
            <rect x="1" y="3" width="12" height="10" rx="1" fill="#12486c" />
            <path d="M5 6h2v2H5zM7.5 6h2v2h-2z" fill="#e85030" />
            <path d="M5 8.5h2v2H5z" fill="#2090e0" />
            <path d="M7.5 8.5h2v2h-2z" fill="#f0c030" />
          </svg>
        </TaskIcon>
        <TaskIcon $ml={1}>
          <svg viewBox="0 0 14 14">
            <path d="M1 5l6-4 6 4v8H1z" fill="#1c7ac8" />
            <path d="M1 5l6 4 6-4" fill="#fff" stroke="#fff" />
          </svg>
          <Badge>99+</Badge>
        </TaskIcon>
        <TaskIcon>
          <svg viewBox="0 0 14 14">
            <rect x="0" y="0" width="14" height="14" rx="1" fill="#1c90c8" />
            <path d="M5 3v8h5" stroke="#fff" strokeWidth="1.7" fill="none" />
          </svg>
        </TaskIcon>
        <TaskIcon $running>
          <svg viewBox="0 0 14 14">
            <circle cx="7" cy="7" r="6.5" fill="#e04030" />
            <path d="M1 4l3 8h5l4-7z" fill="#30a050" />
            <path d="M7 14c4 0 7-3 7-7 0-1-.5-2-1-2H9l-2 9z" fill="#f0c830" />
            <circle cx="7" cy="7" r="2.8" fill="#2878d8" stroke="#fff" />
          </svg>
        </TaskIcon>
        <TaskIcon $running $active>
          <svg viewBox="0 0 14 14">
            <rect x="0" y="1" width="14" height="12" fill="#101018" />
            <path d="M3 3l6 4 3 4-6-3z" fill="#e88020" />
            <path d="M8 3l3 2-2 1z" fill="#2878d8" />
          </svg>
        </TaskIcon>
        <TaskIcon $running>
          <svg viewBox="0 0 14 14">
            <path d="M2 0h7l3 3v11H2z" fill="#2c90d8" />
            <path d="M3.5 2h5v2h2v8.5h-7z" fill="#e8f2fa" />
            <path d="M5 6h4M5 8h4M5 10h2" stroke="#2c70b8" />
          </svg>
        </TaskIcon>
        <BatteryMeter>
          <BatteryLevel style={{ width: `${batteryPercent}%` }} />
          <BatteryText>{batteryPercent}%</BatteryText>
        </BatteryMeter>
        <TrayIcon>
          <svg viewBox="0 0 10 10"><path d="M3 0v3M7 0v3M2 3h6v2l-2 2v3H4V7L2 5z" fill="#f8f8f8" stroke="#ddd" strokeWidth=".5" /></svg>
        </TrayIcon>
        <TrayIcon $ml={11}>
          <svg viewBox="0 0 10 10"><path d="M2 8a2 2 0 0 1 0-4 3 3 0 0 1 6 0 2 2 0 0 1 0 4z" fill="#78b8e0" /></svg>
        </TrayIcon>
        <TrayText $ml={6} $size={8.4}>29°C</TrayText>
        <TrayIcon $ml={7}>
          <svg viewBox="0 0 10 10"><path d="M1 7l4-4 4 4" fill="none" stroke="#222" /></svg>
        </TrayIcon>
        <TrayIcon>
          <svg viewBox="0 0 10 10"><rect x="2.5" y="2" width="5" height="6" fill="none" stroke="#333" /><path d="M3 0h4M3 10h4" stroke="#333" /></svg>
        </TrayIcon>
        <TrayIcon>
          <svg viewBox="0 0 10 10"><path d="M1 7a3 3 0 0 1 3-4 3 3 0 0 1 5 2" fill="none" stroke="#333" /><circle cx="7" cy="7" r="2.5" fill="#d02828" /></svg>
        </TrayIcon>
        <TrayIcon>
          <svg viewBox="0 0 10 10"><rect x="1" y="1" width="8" height="8" fill="none" stroke="#333" /><circle cx="7" cy="7" r="2" fill="#1c70c8" /></svg>
        </TrayIcon>
        <TrayIcon>
          <svg viewBox="0 0 10 10"><rect x="1" y="3" width="7" height="5" fill="#444" /><rect x="8" y="4.5" width="1.5" height="2" fill="#444" /></svg>
        </TrayIcon>
        <TrayIcon>
          <svg viewBox="0 0 10 10"><path d="M1 9h1V7H1zM3.5 9h1V5h-1zM6 9h1V3H6zM8.5 9h1V1h-1z" fill="#8a8a90" /></svg>
        </TrayIcon>
        <TrayIcon>
          <svg viewBox="0 0 10 10"><path d="M1 4h2l3-3v8L3 6H1z" fill="#444" /><path d="M7.5 3l2 4" stroke="#888" /></svg>
        </TrayIcon>
        <TrayStack $w={18} $ml={2}>
          ENG
          <br />
          IN
        </TrayStack>
        <TrayStack $w={30} $ml={5}>
          11:02 AM
          <br />
          1/7/2022
        </TrayStack>
        <NoteIcon>
          <svg viewBox="0 0 12 12"><path d="M1 1h10v8H5l-2 2V9H1z" fill="#222" /><path d="M3 3.5h6M3 6h6" stroke="#fff" strokeWidth=".7" /></svg>
          <NoteCount>19</NoteCount>
        </NoteIcon>
      </Taskbar>
    </Screen>
  );
}
